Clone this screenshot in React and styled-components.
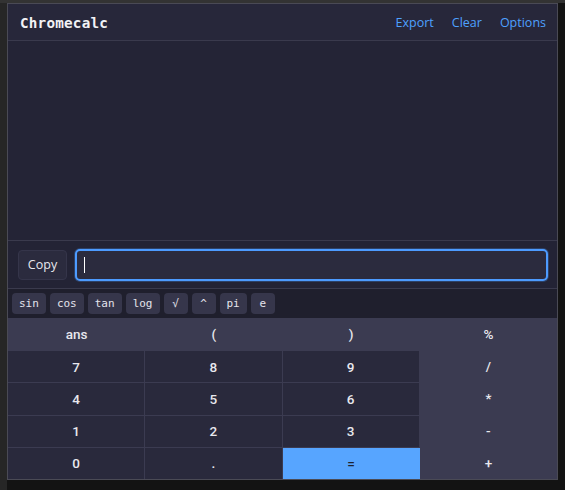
import styled, { createGlobalStyle } from "styled-components";

const GlobalStyle = createGlobalStyle`
  html, body {
    margin: 0;
    padding: 0;
    background: #131313;
  }
  * {
    box-sizing: border-box;
  }
`;

const funcs = ["sin", "cos", "tan", "log", "√", "^", "pi", "e"];

const keys = [
  { label: "ans", kind: "top" },
  { label: "(", kind: "top" },
  { label: ")", kind: "top" },
  { label: "%", kind: "op" },
  { label: "7", kind: "digit" },
  { label: "8", kind: "digit" },
  { label: "9", kind: "digit" },
  { label: "/", kind: "op" },
  { label: "4", kind: "digit" },
  { label: "5", kind: "digit" },
  { label: "6", kind: "digit" },
  { label: "*", kind: "op" },
  { label: "1", kind: "digit" },
  { label: "2", kind: "digit" },
  { label: "3", kind: "digit" },
  { label: "-", kind: "op" },
  { label: "0", kind: "digit" },
  { label: ".", kind: "digit" },
  { label: "=", kind: "eq" },
  { label: "+", kind: "op" },
];

export default function App() {
  return (
    <>
      <GlobalStyle />
      <Backdrop>
        <Popup>
          <Header>
            <Title>Chromecalc</Title>
            <Links>
              <Link>Export</Link>
              <Link>Clear</Link>
              <Link>Options</Link>
            </Links>
          </Header>
          <Display />
          <InputRow>
            <CopyButton>Copy</CopyButton>
            <EntryWrap>
              <Entry autoFocus defaultValue="" />
            </EntryWrap>
          </InputRow>
          <FuncRow>
            {funcs.map((f) => (
              <FuncButton key={f}>{f}</FuncButton>
            ))}
          </FuncRow>
          <Keypad>
            {keys.map((k) => (
              <Key key={k.label} $kind={k.kind}>
                {k.label}
              </Key>
            ))}
          </Keypad>
        </Popup>
      </Backdrop>
    </>
  );
}

const Backdrop = styled.div`
  width: 565px;
  height: 490px;
  padding: 3px 7px 0 7px;
  background: linear-gradient(#333 0 3px, transparent 3px),
    linear-gradient(90deg, #262626 0 7px, transparent 7px), #131313;
`;

const Popup = styled.div`
  width: 551px;
  height: 477px;
  border: 1px solid #4a4a55;
  background: #232335;
  display: flex;
  flex-direction: column;
`;

const Header = styled.div`
  height: 37px;
  flex-shrink: 0;
  display: flex;
  align-items: center;
  justify-content: space-between;
  padding: 1px 11px 0 12px;
  background: #27273a;
  border-bottom: 1px solid #3a3a4d;
`;

const Title = styled.h1`
  margin: 0;
  font-family: "DejaVu Sans Mono", "Liberation Mono", monospace;
  font-weight: bold;
  font-size: 14.3px;
  color: #f2f2f5;
  letter-spacing: 0.2px;
`;

const Links = styled.nav`
  display: flex;
  gap: 18px;
`;

const Link = styled.a`
  font-family: "Open Sans", "Noto Sans", sans-serif;
  font-size: 12.5px;
  color: #4ea1ff;
  cursor: pointer;
`;

const Display = styled.div`
  height: 200px;
  flex-shrink: 0;
  background: #242436;
  border-bottom: 1px solid #3a3a4d;
`;

const InputRow = styled.div`
  height: 48px;
  flex-shrink: 0;
  display: flex;
  align-items: center;
  gap: 8px;
  padding: 0 9px 0 10px;
  background: #232335;
  border-bottom: 1px solid #3a3a4d;
`;

const CopyButton = styled.button`
  width: 49px;
  height: 30px;
  border-radius: 4px;
  border: 1px solid #35354a;
  background: #2b2b3e;
  color: #e8e8ee;
  font-family: "Open Sans", "Noto Sans", sans-serif;
  font-size: 12.5px;
  padding: 0;
`;

const EntryWrap = styled.div`
  flex: 1;
  position: relative;
  display: flex;

  &::after {
    content: "";
    position: absolute;
    left: 9px;
    top: 8px;
    width: 1px;
    height: 16px;
    background: #ffffff;
  }
`;

const Entry = styled.input`
  flex: 1;
  height: 32px;
  border-radius: 5px;
  border: 2px solid #4d9bff;
  box-shadow: 0 0 0 1px rgba(77, 155, 255, 0.25);
  background: #2b2b3e;
  color: #ffffff;
  font-family: "Open Sans", "Noto Sans", sans-serif;
  font-size: 14px;
  padding: 0 7px;
  outline: none;
  caret-color: transparent;
`;

const FuncRow = styled.div`
  height: 29px;
  flex-shrink: 0;
  display: flex;
  align-items: center;
  gap: 4px;
  padding: 0 4px;
  background: #1f1f2d;
`;

const FuncButton = styled.button`
  height: 21px;
  min-width: 24px;
  padding: 0 7px;
  border: none;
  border-radius: 4px;
  background: #36364b;
  color: #e4e4ec;
  font-family: "DejaVu Sans Mono", "Liberation Mono", monospace;
  font-size: 11px;
`;

const keyColors = {
  top: { bg: "#3b3b51", fg: "#e8e8ee" },
  op: { bg: "#3b3b51", fg: "#e8e8ee" },
  digit: { bg: "#29293c", fg: "#e8e8ee" },
  eq: { bg: "#57a5ff", fg: "#1d2230" },
};

const Keypad = styled.div`
  flex: 1;
  display: grid;
  grid-template-columns: repeat(4, 1fr);
  grid-template-rows: repeat(5, 1fr);
  background: #3b3b51;
`;

const Key = styled.button`
  border: none;
  border-top: ${(p) =>
    p.$kind === "digit" || p.$kind === "eq" ? "1px solid #3b3b51" : "none"};
  border-right: ${(p) =>
    p.$kind === "digit" ? "1px solid #3b3b51" : "none"};
  background: ${(p) => keyColors[p.$kind].bg};
  color: ${(p) => keyColors[p.$kind].fg};
  font-family: Roboto, "Liberation Sans", sans-serif;
  font-weight: 500;
  font-size: 13.5px;
  padding: 0;
`;
